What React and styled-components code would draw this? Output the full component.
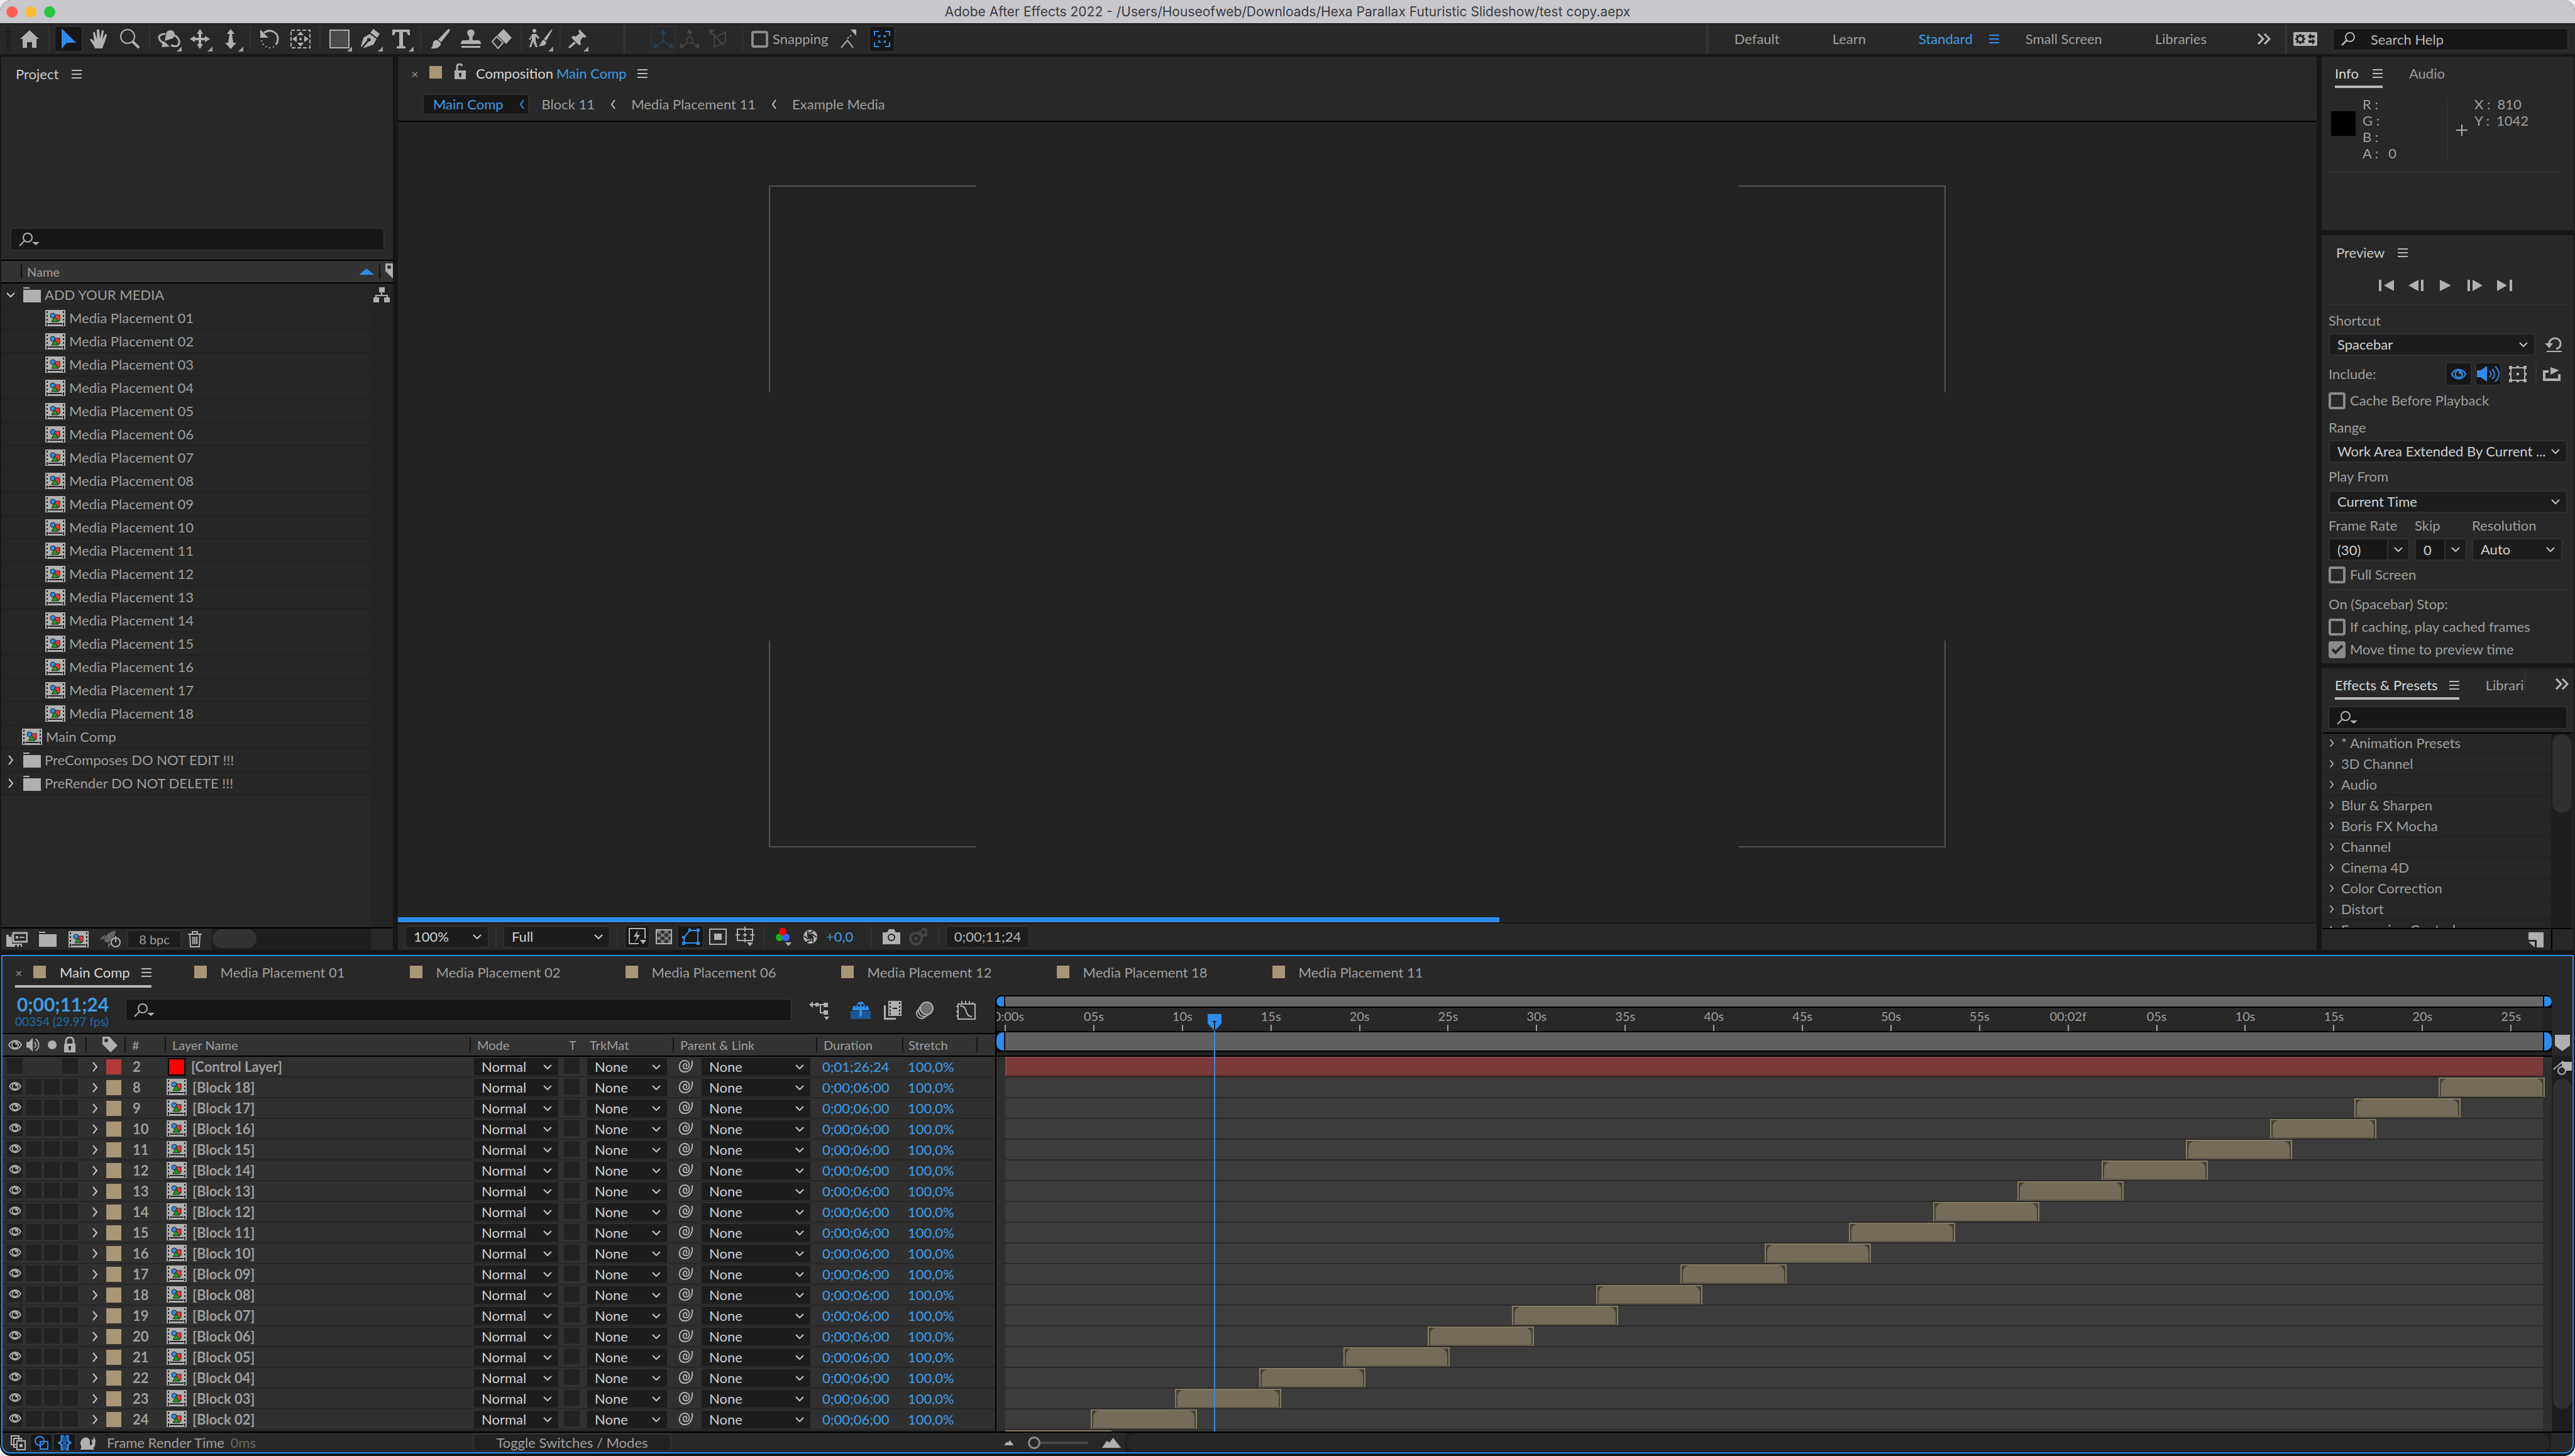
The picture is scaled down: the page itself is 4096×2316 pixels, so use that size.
import React from 'react';
import styled, { createGlobalStyle, css } from 'styled-components';

const GlobalStyle = createGlobalStyle`
   * { box-sizing: border-box; }

   body {
      margin: 0;
      background: #ececf0;
      color: #9e9e9e;
      font: 22px/26px Lato, "Open Sans", sans-serif;
   }

   button, input, select {
      margin: 0;
      padding: 0;
      border: 0;
      background: none;
      color: inherit;
      font: inherit;
   }

   ul, h1, h2 { margin: 0; padding: 0; list-style: none; font: inherit; }
   svg { display: block; flex: none; }
`;

const BLUE = '#2d8ceb';
const LINK = '#3f9ce6';
const ICON = '#b0b0b0';

/* ---------- data ---------- */

const DURATION = 86.8;
const PLAYHEAD = 11.8;
const pct = (seconds) => `${(seconds / DURATION) * 100}%`;

const media = Array.from({ length: 18 }, (_, i) => `Media Placement ${String(i + 1).padStart(2, '0')}`);

const blocks = Array.from({ length: 18 }, (_, i) => {
   const n = 18 - i;
   return {
      index: i + 8,
      name: `[Block ${String(n).padStart(2, '0')}]`,
      start: n === 1 ? 0 : 4.81 + 4.756 * (n - 2),
   };
});

const ticks = [
   '00:00s', '05s', '10s', '15s', '20s', '25s', '30s', '35s', '40s', '45s',
   '50s', '55s', '00:02f', '05s', '10s', '15s', '20s', '25s',
];

const effects = [
   '* Animation Presets', '3D Channel', 'Audio', 'Blur & Sharpen', 'Boris FX Mocha',
   'Channel', 'Cinema 4D', 'Color Correction', 'Distort', 'Expression Controls',
];

const timelineTabs = ['01', '02', '06', '12', '18', '11'];

/* ---------- icons ---------- */

const Svg = ({ w = 30, h = 30, box = '0 0 30 30', children, ...rest }) => (
   <svg width={w} height={h} viewBox={box} fill={ICON} aria-hidden='true' {...rest}>{children}</svg>
);

const line = { fill: 'none', stroke: ICON, strokeWidth: 2 };

const Chevron = ({ dir = 'down', color = '#c4c4c4', size = 18 }) => {
   const d = {
      down: 'M3 6 L9 12 L15 6',
      right: 'M6 2 L12 9 L6 16',
      left: 'M12 2 L7 9 L12 16',
   }[dir];
   return <svg width={size} height={size} viewBox='0 0 18 18' fill='none' stroke={color} strokeWidth='2' aria-hidden='true'><path d={d} /></svg>;
};

const MenuIcon = ({ color = '#b8b8b8' }) => (
   <svg width='16' height='16' viewBox='0 0 16 16' fill={color} aria-hidden='true'><path d='M0 1h16v2H0zM0 7h16v2H0zM0 13h16v2H0z' /></svg>
);

const MoreIcon = () => (
   <svg width='22' height='18' viewBox='0 0 22 18' fill='none' stroke='#b8b8b8' strokeWidth='3' aria-hidden='true'><path d='M2 1l8 8-8 8M12 1l8 8-8 8' /></svg>
);

const SearchIcon = ({ menu }) => (
   <svg width='36' height='24' viewBox='0 0 36 24' aria-hidden='true'>
      <circle cx='14' cy='9' r='7' fill='none' stroke={ICON} strokeWidth='2' />
      <path d='M9 14L1 22' stroke={ICON} strokeWidth={menu ? 2 : 3} />
      {menu && <path d='M21 16h12l-6 5z' fill={ICON} />}
   </svg>
);

const HomeIcon = () => <Svg w={32}><path d='M15 1L0 15h4v14h7v-9h8v9h7V15h4z' /></Svg>;
const ArrowIcon = () => <Svg w={26} h={34} box='0 0 26 34' fill={BLUE}><path d='M2 0v33l8-10h15z' /></Svg>;
const HandIcon = () => (
   <Svg w={32} h={32} box='0 0 32 32'>
      <path d='M9 31C7 25 3 21 1 17c1-2 3-1 5 1l2 2L6 6c1-2 3-1 3 0l3 10L12 2c1-2 3-2 4 0l1 13 3-12c1-2 3-1 3 1l-2 13 4-8c1-2 3-1 3 1-2 6-3 12-6 17l-1 4z' />
   </Svg>
);
const ZoomIcon = () => <Svg w={32} h={32} box='0 0 32 32'><circle cx='12' cy='12' r='11' {...line} /><path d='M20 20l10 10' stroke={ICON} strokeWidth='4' /></Svg>;
const OrbitIcon = () => (
   <Svg w={36} h={30} box='0 0 36 30'>
      <circle cx='20' cy='8' r='7' />
      <path d='M12 7C4 7 0 11 3 16c2 4 6 6 11 8M27 9c6 4 9 10 6 15-2 3-7 3-12 1' fill='none' stroke={ICON} strokeWidth='3' />
      <path d='M9 18l10 9-13 1zM13 8l8 7-10 3z' />
   </Svg>
);
const PanIcon = () => (
   <Svg w={32} h={32} box='0 0 32 32'>
      <path d='M14 7h4v18h-4z' /><path d='M7 14h18v4H7z' />
      <path d='M16 0l5 8H11zM16 32l5-8H11zM0 16l8-5v10zM32 16l-8-5v10z' />
   </Svg>
);
const DollyIcon = () => <Svg w={20} h={32} box='0 0 20 32'><path d='M10 0l6 8h-4l2 14h5l-9 10-9-10h5L8 8H4z' /></Svg>;
const RotateIcon = () => (
   <Svg w={34} h={32} box='0 0 34 32'>
      <path d='M8 6c10-7 22-1 22 10 0 4-1 6-3 9' fill='none' stroke={ICON} strokeWidth='3' />
      <path d='M2 1v13h13z' />
      <path d='M4 18c1 7 7 12 13 12 4 0 8-2 10-5' fill='none' stroke={ICON} strokeWidth='2' strokeDasharray='2 4' />
   </Svg>
);
const AnchorIcon = () => (
   <Svg w={32} h={30} box='0 0 32 30'>
      <rect x='1' y='1' width='30' height='28' fill='none' stroke={ICON} strokeWidth='2' strokeDasharray='6 3' />
      <path d='M16 3l5 6H11zM16 27l5-6H11zM3 15l7-5v10zM29 15l-7-5v10z' /><circle cx='16' cy='15' r='2' />
   </Svg>
);
const RectIcon = () => <Svg w={32} h={30} box='0 0 32 30'><rect x='1' y='1' width='30' height='28' fill='#4a4a4a' stroke={ICON} strokeWidth='2' /></Svg>;
const PenIcon = () => (
   <Svg w={32} h={32} box='0 0 32 32'>
      <path d='M21 0l10 8-4 6-11-8z' />
      <path d='M15 8l11 8-5 9L4 31l9-11a3 3 0 1 0-2-2L2 29 1 28l4-14z' />
   </Svg>
);
const TypeIcon = () => <Svg w={28} h={30} box='0 0 28 30'><path d='M0 0h28v9h-3l-2-5h-6v22l4 1v3H7v-3l4-1V4H5L3 9H0z' /></Svg>;
const BrushIcon = () => (
   <Svg w={32} h={32} box='0 0 32 32'>
      <path d='M31 0c1 1 1 2 0 4L18 21l-5-4L28 1zM12 18l5 4c1 6-5 10-16 9 4-3 3-6 4-9 1-4 4-5 7-4z' />
   </Svg>
);
const StampIcon = () => (
   <Svg w={32} h={30} box='0 0 32 30'>
      <path d='M16 0c5 0 7 4 5 8-2 3-3 5-2 9h8c3 0 5 2 5 6H0c0-4 2-6 5-6h8c1-4 0-6-2-9-2-4 0-8 5-8zM1 26h30v3H1z' />
   </Svg>
);
const EraserIcon = () => (
   <Svg w={34} h={32} box='0 0 34 32'><path d='M20 0l13 14-9 10L10 10z' /><path d='M9 12L2 20l9 11 8-9z' fill='none' stroke={ICON} strokeWidth='2' /></Svg>
);
const RotoIcon = () => (
   <Svg w={38} h={32} box='0 0 38 32'>
      <circle cx='9' cy='3' r='3' />
      <path d='M6 8h6l5 6-2 2-4-4v7l3 10h-3l-4-9-3 9H1l4-12v-5l-2 5H0zM38 1L28 19l-4-3L36 1zM24 17l4 4c0 4-4 7-12 6 4-3 3-8 8-10z' />
   </Svg>
);
const PinIcon = () => <Svg w={30} h={30} box='0 0 30 30'><path d='M18 0l11 11-3 2-3-1-4 6 1 6-3 1L5 13l2-3 5 1 6-5-2-4zM9 19l3 3L2 30l-2-2z' /></Svg>;
const AxisIcon = ({ color, ring }) => (
   <Svg w={32} h={32} box='0 0 32 32' fill={color}>
      <path d='M16 5v14L4 28M16 19l12 9' fill='none' stroke={color} strokeWidth='2' />
      <path d='M16 0l5 7H11zM0 31l2-9 6 7zM32 31l-2-9-6 7z' />
      {ring && <circle cx='16' cy='18' r='5' fill='#282828' stroke={color} strokeWidth='2' />}
   </Svg>
);
const ViewAxisIcon = () => (
   <Svg w={30} h={30} box='0 0 30 30' fill='#454545'>
      <path d='M8 7v21l18-8V4L8 13M3 4l21 22' fill='none' stroke='#454545' strokeWidth='2' /><path d='M0 0h9L1 9z' />
   </Svg>
);
const SnapIcon = () => (
   <Svg w={26} h={30} box='0 0 26 30'>
      <path d='M1 29l10-12 9 12' {...line} /><path d='M11 14l6-5' stroke={ICON} strokeWidth='2' strokeDasharray='3 2' /><path d='M16 0h9v10z' />
   </Svg>
);
const FocusIcon = () => (
   <Svg w={26} h={26} box='0 0 26 26'>
      <path d='M1 8V1h7M18 1h7v7M25 18v7h-7M8 25H1v-7M8 11V8h3M15 8h3v3M18 15v3h-3M11 18H8v-3' fill='none' stroke={BLUE} strokeWidth='2' />
   </Svg>
);
const SyncIcon = () => (
   <Svg w={38} h={22} box='0 0 38 22'>
      <rect width='38' height='22' rx='2' fill={ICON} />
      <circle cx='11' cy='11' r='5' fill='none' stroke='#222' strokeWidth='3' />
      <path d='M11 3v3M11 16v3M3 11h3M16 11h3M5 5l2 2M15 15l2 2M17 5l-2 2M7 15l-2 2' stroke='#222' strokeWidth='3' />
      <path d='M23 7l5-5v3h6v4h-6v3zM35 15l-5-5v3h-6v4h6v3z' fill='#222' />
   </Svg>
);
const CompIcon = () => (
   <Svg w={32} h={26} box='0 0 32 26'>
      <path d='M0 0h32v26H0z' />
      <path d='M2 2h2v3H2zM2 8h2v3H2zM2 14h2v3H2zM2 20h2v5H2zM28 2h2v3h-2zM28 8h2v3h-2zM28 14h2v3h-2zM28 20h2v5h-2zM5 21h22v2H5z' fill='#222' />
      <rect x='15' y='8' width='8' height='9' fill='#e33b3b' stroke='#222' />
      <circle cx='12' cy='9' r='4' fill='#2d8ceb' stroke='#222' />
      <path d='M15 10l6 9H10z' fill='#1f9a1f' stroke='#222' />
   </Svg>
);
const FolderIcon = () => <Svg w={28} h={24} box='0 0 28 24'><path d='M0 0h10v2H0zM0 4h28v20H0z' /></Svg>;
const FlowIcon = () => (
   <Svg w={26} h={24} box='0 0 26 24'><path d='M9 0h9v8H9zM0 16h9v8H0zM17 16h9v8h-9z' /><path d='M13 8v5M4 16v-3h18v3' {...line} /></Svg>
);
const TagIcon = () => <Svg w={24} h={26} box='0 0 24 26'><path d='M0 0h11l13 14-11 11L0 12z' /><circle cx='6' cy='6' r='3' fill='#333' /></Svg>;
const InterpretIcon = () => (
   <Svg w={34} h={24} box='0 0 34 24'>
      <path d='M0 5h4v3h4V5h1v14h16v5h-2v-3h-3v3h-3v-3h-3v3H0z' /><path d='M11 2h22v14H11z' fill='#282828' stroke={ICON} strokeWidth='3' />
      <path d='M15 7h4v4h-4zM21 8h8v2h-8z' />
   </Svg>
);
const RocketIcon = () => (
   <Svg w={34} h={28} box='0 0 34 28'>
      <path d='M26 0C15 2 8 8 8 17l5 3C21 15 25 10 26 0zM9 6l-9 9 8-2zM14 21v7l6-8z' fill='#666' />
      <circle cx='26' cy='19' r='7' fill='#282828' stroke={ICON} strokeWidth='2' /><path d='M26 9v10' stroke={ICON} strokeWidth='2' />
   </Svg>
);
const TrashIcon = () => (
   <Svg w={22} h={26} box='0 0 22 26'><path d='M0 5h22M7 5V1h8v4M3 5l1 20h14l1-20M8 9v12M11 9v12M14 9v12' {...line} /></Svg>
);
const LockIcon = ({ open }) => (
   <Svg w={20} h={26} box='0 0 20 26'>
      <path d={open ? 'M5 12V5c0-5 7-5 8-1' : 'M4 12V7c0-8 12-8 12 0v5'} fill='none' stroke={ICON} strokeWidth='3' />
      <path d='M1 11h18v14H1z' /><path d='M8 15h4v3l-1 4H9l-1-4z' fill='#282828' />
   </Svg>
);
const EyeIcon = ({ color = ICON, w = 22, h = 18 }) => (
   <Svg w={w} h={h} box='0 0 22 18'>
      <path d='M1 9C6 0 16 0 21 9 16 18 6 18 1 9z' fill='#1e1e1e' stroke={color} strokeWidth='2' />
      <circle cx='11' cy='9' r='5' fill='#1e1e1e' stroke={color} strokeWidth='2' />
      <circle cx='13' cy='7' r='2' fill={color} />
   </Svg>
);
const SpeakerIcon = ({ color = ICON, w = 24, h = 24 }) => (
   <Svg w={w} h={h} box='0 0 24 24'>
      <path d='M0 7h4l7-7v24l-7-7H0z' fill={color} /><path d='M14 7c3 3 3 7 0 10M16 2c7 4 7 16 0 20' fill='none' stroke={color} strokeWidth='2' />
   </Svg>
);
const LoudIcon = () => (
   <Svg w={36} h={26} box='0 0 36 26' fill={BLUE}>
      <path d='M0 7h6l10-7v25L6 18H0z' />
      <path d='M20 8c3 3 3 7 0 10M24 5c5 5 5 11 0 16M29 1c8 7 8 17 0 24' fill='none' stroke={BLUE} strokeWidth='2' />
   </Svg>
);
const MaskIcon = ({ color = ICON }) => (
   <Svg w={28} h={26} box='0 0 28 26' fill={color}>
      <path d='M3 3h22v20H3z' fill='none' stroke={color} strokeWidth='2' />
      <path d='M0 0h5v5H0zM12 0h4v4h-4zM23 0h5v5h-5zM0 11h4v4H0zM24 11h4v4h-4zM0 21h5v5H0zM12 22h4v4h-4zM23 21h5v5h-5zM12 11h4v4h-4z' />
   </Svg>
);
const RestartIcon = () => (
   <Svg w={28} h={24} box='0 0 28 24'><path d='M6 12C8-2 26 0 25 11c0 4-3 7-7 8' fill='none' stroke={ICON} strokeWidth='3' /><path d='M0 10h13l-6 8zM3 22h24v2H3z' /></Svg>
);
const ExportIcon = () => (
   <Svg w={28} h={22} box='0 0 28 22'><path d='M9 7H2v13h24v-9' fill='none' stroke={ICON} strokeWidth='4' /><path d='M12 0l14 5-14 7z' /></Svg>
);

const transport = [
   ['First frame', 'M0 0h4v18H0zM24 0v18L8 9z'],
   ['Previous frame', 'M16 0v18L0 9zM20 0h4v18h-4z'],
   ['Play', 'M3 0v18l18-9z'],
   ['Next frame', 'M0 0h4v18H0zM8 0v18l16-9z'],
   ['Last frame', 'M0 0v18l16-9zM20 0h4v18h-4z'],
];

const FastIcon = () => (
   <Svg w={28} h={28} box='0 0 28 28'>
      <path d='M16 25H1V1h25v16' {...line} /><path d='M15 3L8 14h5l-3 9 8-12h-5zM18 19h10l-5 7z' />
   </Svg>
);
const CheckerIcon = () => (
   <Svg w={26} h={24} box='0 0 26 24'>
      <rect x='1' y='1' width='24' height='22' fill='#333' stroke={ICON} strokeWidth='2' />
      <path d='M2 2h6v5H2zM14 2h6v5h-6zM8 7h6v5H8zM20 7h4v5h-4zM2 12h6v5H2zM14 12h6v5h-6zM8 17h6v5H8zM20 17h4v5h-4z' fill='#777' />
   </Svg>
);
const PathIcon = () => (
   <Svg w={28} h={26} box='0 0 28 26' fill={BLUE}>
      <path d='M12 3h13v20H3V14z' fill='none' stroke={BLUE} strokeWidth='2' />
      <path d='M10 0h4v5h-4zM23 0h5v5h-5zM0 12h5v4H0zM0 21h5v5H0zM23 21h5v5h-5z' />
   </Svg>
);
const RoiIcon = () => <Svg w={28} h={26} box='0 0 28 26'><rect x='1' y='1' width='26' height='24' {...line} /><path d='M8 8h12v10H8z' /></Svg>;
const GuidesIcon = () => (
   <Svg w={30} h={32} box='0 0 30 32'>
      <rect x='3' y='4' width='24' height='18' {...line} /><path d='M15 0v8M15 18v7M0 13h7M23 13h7M12 13h6M15 10v6' {...line} /><path d='M18 25h10l-5 6z' />
   </Svg>
);
const RgbIcon = () => (
   <Svg w={26} h={30} box='0 0 26 30'>
      <circle cx='7' cy='16' r='6' fill='#17b217' /><circle cx='17' cy='16' r='6' fill='#3a62ff' /><circle cx='12' cy='7' r='6' fill='#f00' /><path d='M16 24h10l-5 6z' />
   </Svg>
);
const ApertureIcon = () => (
   <Svg w={24} h={24} box='0 0 24 24'>
      <circle cx='12' cy='12' r='11' />
      <path d='M9 8L17 2M14 7l8 6M16 12l0 9M14 17l-9 4M9 16L2 11M8 12L8 3' stroke='#282828' strokeWidth='2' /><circle cx='12' cy='12' r='4' fill='#282828' />
   </Svg>
);
const CameraIcon = ({ color = ICON }) => (
   <Svg w={28} h={24} box='0 0 28 24'>
      <path d='M0 5h7l3-5h8l3 5h7v19H0z' fill={color} /><circle cx='14' cy='13' r='6' fill='#282828' /><circle cx='14' cy='13' r='4' fill={color} />
   </Svg>
);
const GhostIcon = () => (
   <Svg w={32} h={28} box='0 0 32 28' fill='#444'>
      <path d='M16 4h4l2-4h6l2 4v10h-8' /><circle cx='24' cy='7' r='3' fill='#282828' /><circle cx='12' cy='17' r='9' fill='none' stroke='#444' strokeWidth='4' /><circle cx='12' cy='17' r='3' />
   </Svg>
);
const NewIcon = () => <Svg w={24} h={24} box='0 0 24 24'><path d='M0 0h24v24H13V12H0zM0 15h10v9z' /></Svg>;
const GraphTreeIcon = () => (
   <Svg w={32} h={32} box='0 0 32 32'><path d='M0 7l6-5v10zM10 4h5v6h-5zM23 4h7v7h-7zM23 16h7v7h-7zM24 26h8l-4 6z' /><path d='M4 7h20M18 7v13h6' {...line} /></Svg>
);
const ShyIcon = () => (
   <Svg w={32} h={28} box='0 0 32 28' fill={BLUE}>
      <path d='M0 15h32v13H0z' fill='#1b5796' /><path d='M9 10C9-3 23-3 23 10h6v4H3v-4zM14 13h4v11h-4zM4 7h4v6H4zM24 7h4v6h-4z' />
      <circle cx='13' cy='6' r='2' fill='#222' /><circle cx='19' cy='6' r='2' fill='#222' />
   </Svg>
);
const BlendIcon = () => (
   <Svg w={28} h={30} box='0 0 28 30'>
      <path d='M0 7h3v20h16v3H0z' /><path d='M7 0h21v24H7z' />
      <path d='M9 2h2v3H9zM9 8h2v3H9zM9 14h2v3H9zM9 19h2v3H9zM24 2h2v3h-2zM24 8h2v3h-2zM24 14h2v3h-2zM24 19h2v3h-2zM14 11h7v2h-7z' fill='#222' />
   </Svg>
);
const BlurIcon = () => (
   <Svg w={28} h={28} box='0 0 28 28'><circle cx='9' cy='19' r='8' {...line} /><circle cx='13' cy='15' r='9' fill='#282828' stroke={ICON} strokeWidth='2' /><circle cx='17' cy='11' r='10' fill='#707070' stroke={ICON} strokeWidth='2' /></Svg>
);
const CurveIcon = () => (
   <Svg w={32} h={30} box='0 0 32 30'>
      <rect x='3' y='5' width='27' height='24' {...line} /><path d='M6 8c14 0 6 17 19 17M9 0v5M15 0v5M21 0v5M26 2v3M0 9h3M0 17h3M0 24h3' {...line} />
   </Svg>
);
const SpiralIcon = () => (
   <Svg w={24} h={22} box='0 0 24 22'>
      <path d='M22 2c1 9-3 19-13 18C-2 19 0 1 11 2c9 1 8 14 1 13-6 0-5-8-1-8 3 0 3 4 1 5' {...line} />
   </Svg>
);
const BinIcon = () => <Svg w={24} h={26} box='0 0 24 26'><path d='M0 0h24v17L12 26 0 17z' /></Svg>;
const CompMarkIcon = () => (
   <Svg w={30} h={24} box='0 0 30 24'><path d='M1 15L15 3v7' {...line} /><path d='M15 3h15v14H15z' /><circle cx='14' cy='17' r='6' fill='#282828' stroke={ICON} strokeWidth='2' /></Svg>
);
const PagesIcon = () => (
   <Svg w={24} h={24} box='0 0 24 24'><path d='M1 1h12v14H1zM5 5h12v14H5z' {...line} /><rect x='10' y='9' width='13' height='14' fill='#282828' stroke={ICON} strokeWidth='2' /><path d='M14 14h5v5h-5z' /></Svg>
);
const ShapesIcon = () => (
   <Svg w={24} h={24} box='0 0 24 24'><circle cx='9' cy='9' r='7' fill='none' stroke={BLUE} strokeWidth='2' /><path d='M10 10h12v12H10z' fill='none' stroke={BLUE} strokeWidth='2' /></Svg>
);
const BracesIcon = () => (
   <Svg w={24} h={24} box='0 0 24 24'>
      <path d='M9 1h6v22H9z' fill='#1b5796' />
      <path d='M10 1H7v8l-4 3 4 3v8h3M14 1h3v8l4 3-4 3v8h-3' fill='none' stroke={BLUE} strokeWidth='3' />
   </Svg>
);
const SnailIcon = () => <Svg w={26} h={22} box='0 0 26 22'><path d='M0 22c4-3 2-6 1-9C0 3 14-2 16 8c0 3-1 7 2 7 3-2 1-7 0-10l3 2 1-6 3 6c-1 6 0 11-4 12l2 3z' /></Svg>;

/* ---------- shared parts ---------- */

const Window = styled.div`
   display: grid;
   grid-template-rows: 38px 48px minmax(0, 1fr) 793px 4px;
   min-height: 100vh;
   overflow: hidden;
   border-radius: 18px;
   background: #171717;
`;

const Panel = styled.section`
   display: flex;
   flex-direction: column;
   min-width: 0;
   background: #282828;
`;

const Tabs = styled.div`
   display: flex;
   align-items: flex-start;
   height: 50px;
   padding: 0 21px;
   gap: ${(p) => p.$gap || 42}px;
`;

const Tab = styled.button`
   display: flex;
   align-items: center;
   gap: 22px;
   height: 50px;
   padding: 8px 0 ${(p) => (p.$active ? 0 : 4)}px;
   border-bottom: ${(p) => (p.$active ? '4px solid #b8b8b8' : '0')};
   color: ${(p) => (p.$active ? '#d6d6d6' : '#9e9e9e')};
   white-space: nowrap;
`;

const PanelTitle = styled.h2`
   display: flex;
   align-items: center;
   gap: 21px;
   height: 55px;
   padding-left: 23px;
   color: #c8c8c8;
`;

const Swatch = styled.span`
   flex: none;
   width: 20px;
   height: 20px;
   background: #a89676;
`;

const Close = styled.span`
   width: 11px;
   color: #8c8c8c;
   font-size: 20px;
   line-height: 20px;
`;

const SearchBox = styled.label`
   display: flex;
   align-items: center;
   gap: 8px;
   height: 37px;
   margin: ${(p) => p.$margin || 0};
   padding-left: 12px;
   border: 2px solid #303030;
   border-radius: 4px;
   background: #171717;

   input {
      flex: 1;
      min-width: 0;
      height: 100%;
      outline: 0;
      color: #b8b8b8;
   }

   input::placeholder { color: #b8b8b8; opacity: 1; }
`;

const Rule = styled.hr`
   height: 2px;
   margin: ${(p) => p.$margin || 0};
   border: 0;
   background: #303030;
`;

const Bar = styled.div`
   display: flex;
   align-items: center;
   height: 100%;
`;

const IconButton = styled.button`
   display: flex;
   align-items: center;
   justify-content: center;
   flex: none;
   position: relative;
   width: ${(p) => p.$w || 43}px;
   height: ${(p) => p.$h || 38}px;

   ${(p) => p.$on && css`
      border: 2px solid #2f2f2f;
      border-radius: 4px;
      background: #171717;
   `}

   ${(p) => p.$framed && css`
      border: 2px solid #303030;
      border-radius: 4px;
   `}

   ${(p) => p.$more && css`
      &::after {
         content: '';
         position: absolute;
         right: 3px;
         bottom: 1px;
         border: 4px solid transparent;
         border-right-color: #a0a0a0;
         border-bottom-color: #a0a0a0;
      }
   `}
`;

const Sep = styled.span`
   display: flex;
   flex: none;
   justify-content: center;
   width: ${(p) => p.$w || 14}px;
   height: ${(p) => p.$h || 40}px;
   margin: ${(p) => p.$margin || 0};

   &::before {
      content: '';
      width: ${(p) => p.$line || 2}px;
      background: #323232;
   }
`;

const Spacer = styled.span`
   flex: none;
   width: ${(p) => p.$w}px;
`;

const SelectBox = styled.span`
   display: grid;
   align-items: center;
   width: ${(p) => p.$w || 'auto'};
   height: ${(p) => p.$h || 36}px;
   border: ${(p) => (p.$flat ? 0 : '2px solid #303030')};
   border-radius: ${(p) => (p.$flat ? 0 : 4)}px;
   background: #1d1d1d;
   color: #cfcfcf;

   select, svg { grid-area: 1 / 1; }

   select {
      appearance: none;
      width: 100%;
      height: 100%;
      padding: 0 28px 0 12px;
      overflow: hidden;
      outline: 0;
      text-overflow: ellipsis;
   }

   svg {
      justify-self: end;
      margin-right: 8px;
      pointer-events: none;
   }
`;

function Select({ label, value, ...rest }) {
   return (
      <SelectBox {...rest}>
         <select aria-label={label} defaultValue={value}><option>{value}</option></select>
         <Chevron />
      </SelectBox>
   );
}

const CheckLabel = styled.label`
   display: flex;
   align-items: center;
   gap: 7px;
   height: 28px;
   margin-top: ${(p) => p.$mt || 0}px;
`;

const CheckBox = styled.span`
   display: grid;
   place-items: center;
   width: 27px;
   height: 27px;

   input, svg { grid-area: 1 / 1; }

   input {
      appearance: none;
      width: 27px;
      height: 27px;
      border: 4px solid #8a8a8a;
      border-radius: 4px;
   }

   input:checked { background: #8a8a8a; }
   svg { pointer-events: none; }
`;

function Check({ children, checked, ...rest }) {
   return (
      <CheckLabel {...rest}>
         <CheckBox>
            <input type='checkbox' defaultChecked={checked} />
            {checked && <svg width='20' height='20' viewBox='0 0 20 20' fill='none' stroke='#262626' strokeWidth='4' aria-hidden='true'><path d='M2 10l5 5L18 4' /></svg>}
         </CheckBox>
         {children}
      </CheckLabel>
   );
}

/* ---------- window chrome ---------- */

const TitleBar = styled.header`
   display: grid;
   grid-template-columns: 200px 1fr 200px;
   align-items: center;
   border-bottom: 1px solid #000;
   background: #c8c7cc;
   color: #3c3c40;
   font: 21px/24px Inter, sans-serif;
   text-align: center;
   white-space: nowrap;
`;

const Lights = styled.div`
   display: flex;
   gap: 12px;
   padding-left: 10px;
`;

const Light = styled.button`
   width: 18px;
   height: 18px;
   border-radius: 50%;
   background: ${(p) => p.$color};
`;

const ToolStrip = styled.div`
   display: flex;
   align-items: center;
   background: #282828;
   white-space: nowrap;
`;

const Grip = styled.span`
   width: 6px;
   height: 38px;
   margin: 0 8px 0 10px;
   background: repeating-linear-gradient(#1c1c1c 0 3px, transparent 3px 5px);
`;

const Workspaces = styled.nav`
   display: flex;
   align-items: center;
   gap: 84px;
   margin-left: auto;
   padding-right: 22px;

   > svg { margin-left: -4px; }
`;

const Workspace = styled.a`
   display: flex;
   align-items: center;
   gap: 26px;
   margin-right: ${(p) => (p.$active ? -42 : 0)}px;
   color: ${(p) => (p.$active ? LINK : '#9e9e9e')};
   text-decoration: none;
`;

const HelpBox = styled.div`
   width: 376px;
   margin: 0 10px 0 24px;

   svg { margin-right: 3px; }
`;

const tools = [
   [['Home', HomeIcon]],
   [['Selection', ArrowIcon, { $on: true }], ['Hand', HandIcon], ['Zoom', ZoomIcon]],
   [['Orbit', OrbitIcon, { $more: true }], ['Pan', PanIcon, { $more: true }], ['Dolly', DollyIcon, { $more: true }]],
   [['Rotate', RotateIcon], ['Anchor point', AnchorIcon]],
   [['Rectangle', RectIcon, { $more: true }], ['Pen', PenIcon, { $more: true }], ['Type', TypeIcon, { $more: true }]],
   [['Brush', BrushIcon], ['Clone stamp', StampIcon], ['Eraser', EraserIcon]],
   [['Roto brush', RotoIcon, { $more: true }]],
   [['Puppet pin', PinIcon, { $more: true, $w: 40 }]],
];

const ToolGroup = styled.div`
   display: flex;
   gap: 3px;
`;

function Toolbar() {
   return (
      <ToolStrip>
         <Grip />
         {tools.map((group, i) => (
            <React.Fragment key={group[0][0]}>
               {i > 0 && <Sep $w={16} />}
               <ToolGroup>
                  {group.map(([name, Icon, props]) => (
                     <IconButton key={name} title={name} $w={46} $h={42} {...props}><Icon /></IconButton>
                  ))}
               </ToolGroup>
            </React.Fragment>
         ))}
         <Sep $w={84} $h={48} $line={4} $margin='0 0 0 12px' />
         <IconButton title='Local axis' $w={40} $h={42} $framed><AxisIcon color='#21405f' /></IconButton>
         <IconButton title='World axis' $w={44} $h={42}><AxisIcon color='#454545' ring /></IconButton>
         <IconButton title='View axis' $w={48} $h={42}><ViewAxisIcon /></IconButton>
         <Sep $w={28} />
         <Check>Snapping</Check>
         <IconButton title='Snap to edges' $w={64} $h={42}><SnapIcon /></IconButton>
         <IconButton title='Snap to features' $w={42} $h={42} $on><FocusIcon /></IconButton>
         <Workspaces>
            <Sep $w={4} $h={48} $line={4} $margin='0 -43px 0 0' />
            <Workspace href='#default'>Default</Workspace>
            <Workspace href='#learn'>Learn</Workspace>
            <Workspace href='#standard' $active>Standard <MenuIcon color={BLUE} /></Workspace>
            <Workspace href='#small'>Small Screen</Workspace>
            <Workspace href='#libraries'>Libraries</Workspace>
            <MoreIcon />
         </Workspaces>
         <Sep $h={48} $w={4} $line={4} $margin='0 10px 0 0' />
         <IconButton title='Sync settings' $w={38}><SyncIcon /></IconButton>
         <HelpBox>
            <SearchBox><SearchIcon /><input aria-label='Search Help' placeholder='Search Help' /></SearchBox>
         </HelpBox>
      </ToolStrip>
   );
}

/* ---------- project ---------- */

const Work = styled.main`
   display: grid;
   grid-template-columns: 623px minmax(0, 1fr) 401px;
   gap: 8px;
   padding: 4px 2px 8px;
`;

const ProjectSearch = styled.div`
   margin-top: 217px;
   padding: 0 13px 14px 14px;
`;

const ProjectHead = styled.div`
   display: flex;
   align-items: center;
   gap: 8px;
   height: 38px;
   padding-left: 31px;
   overflow: hidden;
   border: solid #000;
   border-width: 2px 0;
   background: #333;
   font-size: 20px;

   > i { width: 2px; height: 22px; background: #111; }
   > button { flex: 1; text-align: left; }
   > svg:last-child { margin-right: -12px; }
`;

const ProjectBody = styled.div`
   display: grid;
   grid-template-columns: 1fr 35px;
   flex: 1;
   border-bottom: 2px solid #000;
`;

const ProjectRow = styled.li`
   display: flex;
   align-items: center;
   gap: 9px;
   height: 37px;
   padding-left: ${(p) => p.$indent || 6}px;
   border-bottom: 2px solid #212121;
   background: #262626;

   > svg:first-child { width: 18px; margin-right: ${(p) => (p.$indent ? 0 : 2)}px; }
`;

const NameCell = styled.span`
   display: flex;
   align-items: center;
   gap: 6px;
`;

const SideStrip = styled.div`
   padding: 6px 4px;
   background: #242424;
`;

const ProjectFoot = styled.div`
   display: flex;
   align-items: center;
   height: 34px;
   padding-left: 8px;
   gap: 16px;
`;

const Depth = styled.button`
   width: 87px;
   height: 30px;
   margin: 0 -6px;
   border: 2px solid #303030;
   border-radius: 4px;
   background: #1d1d1d;
   font-size: 20px;
   line-height: 24px;
`;

const ScrollX = styled.div`
   flex: 1;
   height: 34px;
   margin-right: 35px;
   padding: 1px;
   background: #1e1e1e;

   &::before {
      content: '';
      display: block;
      width: 70px;
      height: 30px;
      border-radius: 15px;
      background: #333;
   }
`;

function Project() {
   return (
      <Panel>
         <PanelTitle>Project <MenuIcon /></PanelTitle>
         <ProjectSearch>
            <SearchBox><SearchIcon menu /><input aria-label='Search project' /></SearchBox>
         </ProjectSearch>
         <ProjectHead>
            <i /><button>Name</button>
            <svg width='24' height='10' viewBox='0 0 24 10' fill={BLUE} aria-hidden='true'><path d='M12 0l12 10H0z' /></svg>
            <i /><TagIcon />
         </ProjectHead>
         <ProjectBody>
            <ul>
               <ProjectRow><Chevron /><NameCell><FolderIcon />ADD YOUR MEDIA</NameCell></ProjectRow>
               {media.map((name) => (
                  <ProjectRow key={name} $indent={70}><NameCell><CompIcon />{name}</NameCell></ProjectRow>
               ))}
               <ProjectRow $indent={33}><NameCell><CompIcon />Main Comp</NameCell></ProjectRow>
               <ProjectRow><Chevron dir='right' /><NameCell><FolderIcon />PreComposes DO NOT EDIT !!!</NameCell></ProjectRow>
               <ProjectRow><Chevron dir='right' /><NameCell><FolderIcon />PreRender DO NOT DELETE !!!</NameCell></ProjectRow>
            </ul>
            <SideStrip><FlowIcon /></SideStrip>
         </ProjectBody>
         <ProjectFoot>
            <IconButton title='Interpret footage' $w={34} $h={30}><InterpretIcon /></IconButton>
            <IconButton title='New folder' $w={32} $h={30}><FolderIcon /></IconButton>
            <IconButton title='New composition' $w={34} $h={30}><CompIcon /></IconButton>
            <IconButton title='Performance' $w={34} $h={30}><RocketIcon /></IconButton>
            <Depth>8 bpc</Depth>
            <IconButton title='Delete' $w={22} $h={30}><TrashIcon /></IconButton>
            <ScrollX />
         </ProjectFoot>
      </Panel>
   );
}

/* ---------- composition viewer ---------- */

const ViewerTitle = styled.h2`
   display: flex;
   align-items: center;
   height: 52px;
   padding: 2px 0 0 21px;
   color: #d6d6d6;

   > ${Swatch} { margin: 0 19px 4px 18px; }
   > span:nth-of-type(3) { margin: 0 17px 0 5px; color: ${LINK}; }
   > svg:first-of-type { margin: 0 15px 6px 0; }
`;

const Crumbs = styled.nav`
   display: flex;
   align-items: center;
   height: 50px;
   padding: 0 0 2px 39px;
   gap: 20px;

   a { color: #9e9e9e; text-decoration: none; }
`;

const CrumbActive = styled.span`
   display: flex;
   align-items: center;
   gap: 20px;
   height: 34px;
   padding: 0 1px 0 15px;
   border: 2px solid #303030;
   border-radius: 4px;
   background: #171717;

   && a { color: ${LINK}; }
`;

const Stage = styled.div`
   display: grid;
   flex: 1;
   place-items: center;
   padding-bottom: 10px;
   border-top: 2px solid #000;
   background: #232323;
`;

const SafeFrame = styled.div`
   display: grid;
   grid-template-columns: 329px 329px;
   align-content: space-between;
   justify-content: space-between;
   width: 61%;
   min-width: 1872px;
   aspect-ratio: 16 / 9;
`;

const Corner = styled.span`
   height: 329px;
   border: 0 solid #54524a;
   border-width: ${(p) => p.$edges};
`;

const CacheBar = styled.div`
   height: 10px;
   border-bottom: 2px solid #171717;
   background: linear-gradient(90deg, ${BLUE} 57.4%, #232323 57.4%);
`;

const ViewerBar = styled(Bar)`
   height: 42px;
   padding-left: 11px;
`;

const Exposure = styled.button`
   width: 66px;
   padding-left: 4px;
   color: ${LINK};
   text-align: left;
`;

const TimeBox = styled.button`
   width: 134px;
   height: 36px;
   border: 2px solid #303030;
   border-radius: 4px;
   background: #1d1d1d;
   color: #b4b4b4;
`;

function Viewer() {
   return (
      <Panel>
         <ViewerTitle>
            <Close>×</Close><Swatch /><LockIcon open />Composition <span>Main Comp</span><MenuIcon />
         </ViewerTitle>
         <Crumbs>
            <CrumbActive><a href='#main'>Main Comp</a><Chevron dir='left' color={BLUE} /></CrumbActive>
            <a href='#block'>Block 11</a><Chevron dir='left' />
            <a href='#media'>Media Placement 11</a><Chevron dir='left' />
            <a href='#example'>Example Media</a>
         </Crumbs>
         <Stage>
            <SafeFrame>
               <Corner $edges='2px 0 0 2px' /><Corner $edges='2px 2px 0 0' />
               <Corner $edges='0 0 2px 2px' /><Corner $edges='0 2px 2px 0' />
            </SafeFrame>
         </Stage>
         <CacheBar />
         <ViewerBar>
            <Select label='Magnification' value='100%' $w='134px' />
            <Sep $w={22} $h={32} />
            <Select label='Resolution' value='Full' $w='171px' />
            <Sep $w={22} $h={32} />
            <IconButton title='Fast previews' $on $w={41}><FastIcon /></IconButton>
            <IconButton title='Transparency grid'><CheckerIcon /></IconButton>
            <IconButton title='Mask visibility' $on><PathIcon /></IconButton>
            <IconButton title='Region of interest'><RoiIcon /></IconButton>
            <IconButton title='Grid and guides'><GuidesIcon /></IconButton>
            <Sep $w={18} $h={32} />
            <IconButton title='Channels'><RgbIcon /></IconButton>
            <IconButton title='Reset exposure'><ApertureIcon /></IconButton>
            <Exposure>+0,0</Exposure>
            <Sep $w={20} $h={32} />
            <IconButton title='Take snapshot'><CameraIcon /></IconButton>
            <IconButton title='Show snapshot'><GhostIcon /></IconButton>
            <Sep $w={22} $h={32} />
            <TimeBox>0;00;11;24</TimeBox>
         </ViewerBar>
      </Panel>
   );
}

/* ---------- right column ---------- */

const RightColumn = styled.div`
   display: grid;
   grid-template-rows: 276px 681px minmax(0, 1fr);
   gap: 8px;
`;

const InfoBody = styled.div`
   display: grid;
   grid-template-columns: 39px 123px 2px 20px 1fr;
   column-gap: 11px;
   padding: 13px 15px 12px;

   dl { margin: 0; }
   dl > div { display: flex; gap: 16px; white-space: pre; }
   dl:last-child > div { gap: 11px; }
   dd { margin: 0; }
   svg { justify-self: end; }
`;

const ColorChip = styled.span`
   height: 39px;
   margin-top: 24px;
   background: #000;
`;

const InfoDivider = styled.span`
   margin: 5px 0 2px;
   background: #303030;
`;

const PreviewBody = styled.div`
   padding: 0 10px 0 11px;
`;

const Transport = styled.div`
   display: flex;
   align-items: center;
   justify-content: center;
   gap: 23px;
   height: 50px;
   padding-right: 8px;
`;

const FieldLabel = styled.div`
   height: 32px;
   margin: ${(p) => p.$mt || 0}px 0 ${(p) => p.$mb || 4}px;
   line-height: 32px;
`;

const Line = styled.div`
   display: flex;
   align-items: center;
   gap: ${(p) => p.$gap || 0}px;
   margin-top: ${(p) => p.$mt || 0}px;
   padding-right: ${(p) => p.$pr || 0}px;

   > :first-child { flex: ${(p) => (p.$grow ? 1 : 'none')}; }
`;

const RateGrid = styled.div`
   display: grid;
   grid-template-columns: 129px 83px 1fr;
   gap: 0 8px;
   padding-right: 8px;
`;

const Combo = styled.span`
   display: grid;
   grid-template-columns: 1fr 34px;
   align-items: center;
   height: 36px;
   border: 2px solid #303030;
   border-radius: 4px;
   background: #171717;
   color: #cfcfcf;

   input { width: 100%; height: 100%; padding-left: 12px; }
   button { display: grid; place-items: center; height: 100%; border-left: 2px solid #303030; background: #1d1d1d; }
`;

const EffectTabs = styled(Tabs)`
   padding-right: 8px;

   > button:first-child { gap: 18px; }
   > button:nth-child(2) { width: 64px; overflow: hidden; border-right: 2px solid #303030; }
   > svg { margin: 16px 0 0 auto; }
`;

const EffectArea = styled.div`
   display: grid;
   grid-template-columns: minmax(0, 1fr) 34px;
   flex: 1;
   min-height: 0;
   margin: 5px 2px 0;
   border-top: 2px solid #000;
   border-bottom: 2px solid #000;
`;

const EffectList = styled.ul`
   height: 100%;
   overflow: hidden;
   contain: size;
`;

const EffectRow = styled.li`
   display: flex;
   align-items: center;
   gap: 8px;
   height: 33px;
   padding: 0 0 1px 7px;
   border-bottom: 2px solid #212121;
   background: #262626;

   svg { width: 14px; }
`;

const ScrollY = styled.div`
   padding: 1px 2px;
   background: #1e1e1e;

   &::before {
      content: '';
      display: block;
      width: 30px;
      height: ${(p) => p.$thumb};
      border-radius: 15px;
      background: #303030;
   }
`;

const EffectFoot = styled.div`
   display: flex;
   align-items: center;
   justify-content: flex-end;
   height: 33px;
   margin-right: 34px;
   padding-right: 12px;
   border-right: 2px solid #000;
`;

function Sidebar() {
   return (
      <RightColumn>
         <Panel>
            <Tabs><Tab $active>Info <MenuIcon /></Tab><Tab>Audio</Tab></Tabs>
            <InfoBody>
               <ColorChip />
               <dl>
                  <div><dt>R :</dt></div>
                  <div><dt>G :</dt></div>
                  <div><dt>B :</dt></div>
                  <div><dt>A :</dt><dd>0</dd></div>
               </dl>
               <InfoDivider />
               <svg width='18' height='108' viewBox='0 0 18 108' fill={ICON} aria-hidden='true'><path d='M8 45h2v18H8zM0 53h18v2H0z' /></svg>
               <dl>
                  <div><dt>X :</dt><dd>810</dd></div>
                  <div><dt>Y :</dt><dd>1042</dd></div>
               </dl>
            </InfoBody>
            <Rule $margin='0 18px 0 11px' />
         </Panel>
         <Panel>
            <PanelTitle>Preview <MenuIcon /></PanelTitle>
            <PreviewBody>
               <Transport>
                  {transport.map(([name, d]) => (
                     <button key={name} title={name}><Svg w={24} h={18} box='0 0 24 18'><path d={d} /></Svg></button>
                  ))}
               </Transport>
               <Rule $margin='4px 0 0' />
               <FieldLabel $mt={9}>Shortcut</FieldLabel>
               <Line $gap={15} $pr={8} $grow>
                  <Select label='Shortcut' value='Spacebar' />
                  <IconButton title='Reset' $w={28} $h={36}><RestartIcon /></IconButton>
               </Line>
               <Line $mt={10} $gap={5} $pr={8} $grow>
                  <span>Include:</span>
                  <IconButton title='Video' $w={42} $on><EyeIcon color={BLUE} w={28} h={20} /></IconButton>
                  <IconButton title='Audio' $w={42} $on><LoudIcon /></IconButton>
                  <IconButton title='Overlays' $w={42}><MaskIcon /></IconButton>
                  <Sep $w={6} $h={38} />
                  <IconButton title='Loop' $w={34}><ExportIcon /></IconButton>
               </Line>
               <Check $mt={9}>Cache Before Playback</Check>
               <FieldLabel $mt={13}>Range</FieldLabel>
               <Select label='Range' value='Work Area Extended By Current ...' />
               <FieldLabel $mt={6} $mb={6}>Play From</FieldLabel>
               <Select label='Play from' value='Current Time' />
               <RateGrid>
                  <FieldLabel $mt={4}>Frame Rate</FieldLabel>
                  <FieldLabel $mt={4}>Skip</FieldLabel>
                  <FieldLabel $mt={4}>Resolution</FieldLabel>
                  <Combo><input aria-label='Frame rate' defaultValue='(30)' /><button title='Frame rates'><Chevron /></button></Combo>
                  <Combo><input aria-label='Skip' defaultValue='0' /><button title='Skip values'><Chevron /></button></Combo>
                  <Select label='Preview resolution' value='Auto' />
               </RateGrid>
               <Check $mt={8}>Full Screen</Check>
               <Rule $margin='9px 0 0' />
               <FieldLabel $mt={6}>On (Spacebar) Stop:</FieldLabel>
               <Check $mt={6}>If caching, play cached frames</Check>
               <Check $mt={8} checked>Move time to preview time</Check>
            </PreviewBody>
         </Panel>
         <Panel>
            <EffectTabs $gap={42}>
               <Tab $active>Effects &amp; Presets <MenuIcon /></Tab>
               <Tab>Librari</Tab>
               <MoreIcon />
            </EffectTabs>
            <SearchBox $margin='10px 10px 0'><SearchIcon menu /><input aria-label='Search effects' /></SearchBox>
            <EffectArea>
               <EffectList>
                  {effects.map((name) => <EffectRow key={name}><Chevron dir='right' />{name}</EffectRow>)}
               </EffectList>
               <ScrollY $thumb='125px' />
            </EffectArea>
            <EffectFoot><NewIcon /></EffectFoot>
         </Panel>
      </RightColumn>
   );
}

/* ---------- timeline ---------- */

const TimelinePanel = styled.section`
   display: grid;
   grid-template-rows: 49px minmax(0, 1fr) 33px;
   margin: 0 2px;
   border: 2px solid ${BLUE};
   border-radius: 0 0 14px 14px;
   background: #282828;
   overflow: hidden;
`;

const CompTabs = styled.div`
   display: flex;
   align-items: flex-start;
   padding-left: 20px;
`;

const CompTab = styled(Tab)`
   width: ${(p) => (p.$active ? 'auto' : '343px')};
   margin-right: ${(p) => (p.$active ? 68 : 0)}px;
   padding-top: 6px;

   > ${Swatch} { margin-bottom: 2px; }
   > ${Close} { margin-right: -4px; }
   > svg { margin-left: -4px; }
`;

const TimelineMain = styled.div`
   display: grid;
   grid-template-columns: 1579px minmax(0, 1fr) 33px;
   min-height: 0;
`;

const Outline = styled.div`
   display: grid;
   grid-template-rows: 73px minmax(0, 1fr);
   min-height: 0;
   overflow: hidden;
`;

const OutlineTop = styled.div`
   display: flex;
   align-items: flex-start;
   padding: 18px 0 0 20px;

   > label { flex: 1; margin-right: 23px; }
`;

const Timecode = styled.button`
   width: 175px;
   margin-top: -6px;
   color: ${LINK};
   text-align: left;
   text-indent: 3px;
   font-size: 30px;
   font-weight: 700;
   line-height: 30px;

   small { display: block; color: #1d6cab; font-size: 19px; font-weight: 400; line-height: 26px; text-indent: 0; }
`;

const LayerTable = styled.table`
   display: block;
   contain: size;
   overflow: hidden;

   thead, tbody { display: block; }
`;

const HeadRow = styled.tr`
   display: grid;
   grid-template-columns: 29px 29px 30px 35px 62px 64px 485px 148px 38px 137px 228px 137px 118px 1fr;
   align-items: center;
   height: 38px;
   padding-left: 9px;
   border: solid #000;
   border-width: 2px 0;
   background: #333;
   font-size: 20px;
`;

const HeadCell = styled.th`
   display: flex;
   align-items: center;
   height: 24px;
   padding: 0 0 0 ${(p) => p.$pl || 0}px;
   border-left: ${(p) => (p.$line ? '2px solid #161616' : '0')};
   font-weight: 400;
`;

const LayerRow = styled.tr`
   display: grid;
   grid-template-columns: 30px 29px 29px 29px 41px 28px 68px 489px 143px 37px 145px 37px 192px 136px 1fr;
   height: 33px;
   padding-left: 7px;
   border-bottom: 2px solid #262626;
   background: #303030;

   td { display: flex; align-items: center; min-width: 0; padding: 0; }
   td > svg:only-child { margin-bottom: 2px; }
`;

const Switch = styled.button`
   display: grid;
   place-items: center;
   width: 25px;
   height: 25px;
   margin-bottom: 3px;
   background: ${(p) => (p.$bare ? 'none' : '#222')};
`;

const Label = styled.span`
   width: 24px;
   height: 24px;
   background: ${(p) => p.$color || '#a89676'};
`;

const LayerName = styled.td`
   gap: 9px;
   font-weight: 700;
`;

const LayerNumber = styled(LayerName)`
   && { padding-left: 14px; }
`;

const Solid = styled.span`
   width: 28px;
   height: 28px;
   margin-left: 2px;
   border: 2px solid #000;
   background: #f00;
`;

const BlueCell = styled.td`
   color: ${LINK};
`;

function Layer({ index, name, solid, duration }) {
   return (
      <LayerRow>
         <td><Switch title='Video'>{!solid && <EyeIcon w={22} h={16} />}</Switch></td>
         <td><Switch title='Audio' $bare={solid} /></td>
         <td><Switch title='Solo' $bare={solid} /></td>
         <td><Switch title='Lock' /></td>
         <td><IconButton title='Expand' $w={46} $h={24}><Chevron dir='right' /></IconButton></td>
         <td><Label $color={solid && '#b43a3a'} /></td>
         <LayerNumber>{index}</LayerNumber>
         <LayerName>{solid ? <Solid /> : <CompIcon />}{name}</LayerName>
         <td><Select label='Mode' value='Normal' $flat $w='134px' $h={28} /></td>
         <td><Switch title='Preserve transparency' /></td>
         <td><Select label='Track matte' value='None' $flat $w='127px' $h={28} /></td>
         <td><SpiralIcon /></td>
         <td><Select label='Parent' value='None' $flat $w='173px' $h={28} /></td>
         <BlueCell>{duration}</BlueCell>
         <BlueCell>100,0%</BlueCell>
      </LayerRow>
   );
}

const TimeArea = styled.div`
   display: flex;
   flex-direction: column;
   position: relative;
   min-height: 0;
   margin-top: 12px;
   padding-top: 1px;
   overflow: hidden;
   border-left: 2px solid #000;
   border-radius: 12px 12px 0 0;
   background: #222;
`;

const RangeBar = styled.div`
   display: grid;
   grid-template-columns: 12px minmax(0, 1fr) 12px;
   gap: 2px;
   height: ${(p) => p.$h}px;
   border: solid #000;
   border-width: 2px 0;
   background: #000;

   i { background: ${BLUE}; }
   i:first-child { border-radius: 10px 0 0 10px; }
   i:last-child { border-radius: 0 10px 10px 0; }
   span { background: ${(p) => (p.$wide ? '#5f5f5f' : '#676767')}; }
`;

const Ruler = styled.div`
   display: grid;
   grid-auto-flow: column;
   grid-auto-columns: calc(100% * 5 / ${DURATION});
   height: 37px;
   margin: 0 14px;
   background: #282828;
   font-size: 20px;
   line-height: 20px;
`;

const Tick = styled.span`
   display: flex;
   flex-direction: column;
   align-items: center;
   justify-content: space-between;
   width: 100%;
   margin-left: -50%;
   padding-top: 3px;
   white-space: nowrap;

   &::after {
      content: '';
      width: 2px;
      height: 10px;
      background: #a0a0a0;
   }
`;

const Tracks = styled.div`
   flex: 1;
   min-height: 0;
   margin-top: 6px;
   overflow: hidden;
   border-top: 2px solid #000;
   background: #2f2f2f;
`;

const Track = styled.div`
   height: 33px;
   margin: 0 14px;
   border-bottom: 2px solid #2a2a2a;
   background: #3c3c3c;
`;

const Clip = styled.div`
   width: ${(p) => p.$width};
   height: 31px;
   margin-left: ${(p) => p.$start};
   padding: 0 2px;
   border: 2px solid #857b62;
   border-bottom-color: #5e5547;
   background: #474033;

   &::before {
      content: '';
      display: block;
      height: 100%;
      border-radius: 10px 10px 0 0;
      background: #746b5b;
   }
`;

const SolidClip = styled.div`
   height: 31px;
   border: solid #864848;
   border-width: 2px 0 0 2px;
   border-bottom: 2px solid #602a2a;
   background: #7b3a3a;
`;

const PlayheadLayer = styled.div`
   position: absolute;
   inset: 31px 14px 0;
   pointer-events: none;
`;

const Playhead = styled.div`
   display: flex;
   flex-direction: column;
   align-items: center;
   width: 22px;
   height: 100%;
   transform: translateX(-50%);

   &::after {
      content: '';
      flex: 1;
      width: 2px;
      background: ${BLUE};
   }
`;

const SideTools = styled.div`
   display: flex;
   flex-direction: column;
   align-items: center;
   padding-top: 76px;
   background: linear-gradient(#282828 109px, #1e1e1e 109px);

   > svg + svg { margin: 14px 0 5px; }
`;

const Foot = styled.div`
   display: flex;
   align-items: center;
   border-top: 2px solid #000;
`;

const FootIcons = styled.div`
   display: flex;
   width: 160px;
   padding-left: 6px;
`;

const RenderTime = styled.span`
   width: 588px;
   padding-left: 6px;

   span { margin-left: 4px; color: #666; }
`;

const Toggle = styled.button`
   width: 316px;
   height: 29px;
   border: 2px solid #303030;
   border-radius: 3px;
   background: #222;
`;

const ZoomControl = styled.div`
   display: flex;
   align-items: center;
   gap: 21px;
   width: 722px;
   padding-left: 528px;
`;

const ZoomRange = styled.input`
   appearance: none;
   width: 96px;
   height: 24px;

   &::-webkit-slider-runnable-track { height: 4px; background: linear-gradient(90deg, transparent 16px, #484848 16px); }
   &::-webkit-slider-thumb {
      appearance: none;
      width: 20px;
      height: 20px;
      margin-top: -8px;
      border: 3px solid #8c8c8c;
      border-radius: 50%;
      background: #282828;
   }
`;

const ScrollTrack = styled.div`
   flex: 1;
   height: 31px;
   margin-right: 34px;
   padding: 1px 2px;
   background: #1e1e1e;

   &::before {
      content: '';
      display: block;
      height: 28px;
      border-radius: 14px;
      background: #262626;
   }
`;

const Hill = ({ w, h }) => <Svg w={w} h={h} box='0 0 34 18'><path d='M0 18L9 5l4 4 7-9 14 18z' /></Svg>;

function Timeline() {
   return (
      <TimelinePanel>
         <CompTabs>
            <CompTab $active><Close>×</Close><Swatch />Main Comp <MenuIcon /></CompTab>
            {timelineTabs.map((n) => <CompTab key={n}><Swatch />Media Placement {n}</CompTab>)}
         </CompTabs>
         <TimelineMain>
            <Outline>
               <OutlineTop>
                  <Timecode>0;00;11;24<small>00354 (29.97 fps)</small></Timecode>
                  <SearchBox><SearchIcon menu /><input aria-label='Search layers' /></SearchBox>
                  <IconButton title='Mini-flowchart' $w={40}><GraphTreeIcon /></IconButton>
                  <Spacer $w={20} />
                  <IconButton title='Hide shy layers' $w={51}><ShyIcon /></IconButton>
                  <IconButton title='Frame blending' $w={51}><BlendIcon /></IconButton>
                  <IconButton title='Motion blur' $w={51}><BlurIcon /></IconButton>
                  <IconButton title='Graph editor' $w={82}><CurveIcon /></IconButton>
                  <Spacer $w={5} />
               </OutlineTop>
               <LayerTable>
                  <thead>
                     <HeadRow>
                        <HeadCell aria-label='Video'><EyeIcon /></HeadCell>
                        <HeadCell aria-label='Audio'><SpeakerIcon w={22} /></HeadCell>
                        <HeadCell aria-label='Solo'><Svg w={26} h={14} box='0 0 26 14'><circle cx='12' cy='7' r='7' /></Svg></HeadCell>
                        <HeadCell aria-label='Lock'><LockIcon /></HeadCell>
                        <HeadCell aria-label='Label' $line $pl={25}><TagIcon /></HeadCell>
                        <HeadCell $line $pl={10}>#</HeadCell>
                        <HeadCell $line $pl={10}>Layer Name</HeadCell>
                        <HeadCell $line $pl={10}>Mode</HeadCell>
                        <HeadCell $pl={10}>T</HeadCell>
                        <HeadCell $pl={5}>TrkMat</HeadCell>
                        <HeadCell $line $pl={10}>Parent &amp; Link</HeadCell>
                        <HeadCell $line $pl={10}>Duration</HeadCell>
                        <HeadCell $line $pl={8}>Stretch</HeadCell>
                        <HeadCell $line aria-label='More' />
                     </HeadRow>
                  </thead>
                  <tbody>
                     <Layer index={2} name='[Control Layer]' solid duration='0;01;26;24' />
                     {blocks.slice(0, 17).map((b) => <Layer key={b.index} index={b.index} name={b.name} duration='0;00;06;00' />)}
                  </tbody>
               </LayerTable>
            </Outline>
            <TimeArea>
               <RangeBar $h={20}><i /><span /><i /></RangeBar>
               <Ruler>
                  {ticks.map((t, i) => <Tick key={i}>{t}</Tick>)}
               </Ruler>
               <RangeBar $h={33} $wide><i /><span /><i /></RangeBar>
               <Tracks>
                  <Track><SolidClip /></Track>
                  {blocks.map((b) => (
                     <Track key={b.index}><Clip $start={pct(b.start)} $width={pct(6)} /></Track>
                  ))}
               </Tracks>
               <PlayheadLayer>
                  <Playhead style={{ marginLeft: pct(PLAYHEAD) }}>
                     <svg width='22' height='27' viewBox='0 0 22 27' aria-hidden='true'>
                        <path d='M0 0h22v15L12 26h-2L0 15z' fill={BLUE} /><path d='M8 12h6M11 12v14' stroke='#222' strokeWidth='2' />
                     </svg>
                  </Playhead>
               </PlayheadLayer>
            </TimeArea>
            <SideTools>
               <BinIcon />
               <CompMarkIcon />
               <ScrollY $thumb='525px' />
            </SideTools>
         </TimelineMain>
         <Foot>
            <FootIcons>
               <IconButton title='Layer switches' $w={37} $h={29}><PagesIcon /></IconButton>
               <IconButton title='Transfer controls' $w={37} $h={29} $on><ShapesIcon /></IconButton>
               <IconButton title='In and out' $w={37} $h={29} $on><BracesIcon /></IconButton>
               <IconButton title='Render time' $w={37} $h={29}><SnailIcon /></IconButton>
            </FootIcons>
            <RenderTime>Frame Render Time <span>0ms</span></RenderTime>
            <Toggle>Toggle Switches / Modes</Toggle>
            <ZoomControl>
               <Hill w={18} h={8} />
               <ZoomRange type='range' aria-label='Timeline zoom' min='0' max='100' defaultValue='0' />
               <Hill w={32} h={16} />
            </ZoomControl>
            <ScrollTrack />
         </Foot>
      </TimelinePanel>
   );
}

export default function App() {
   return (
      <>
         <GlobalStyle />
         <Window>
            <TitleBar>
               <Lights>
                  <Light title='Close' $color='#ff5f57' />
                  <Light title='Minimize' $color='#febc2e' />
                  <Light title='Zoom' $color='#28c840' />
               </Lights>
               <h1>Adobe After Effects 2022 - /Users/Houseofweb/Downloads/Hexa Parallax Futuristic Slideshow/test copy.aepx</h1>
            </TitleBar>
            <Toolbar />
            <Work>
               <Project />
               <Viewer />
               <Sidebar />
            </Work>
            <Timeline />
         </Window>
      </>
   );
}
